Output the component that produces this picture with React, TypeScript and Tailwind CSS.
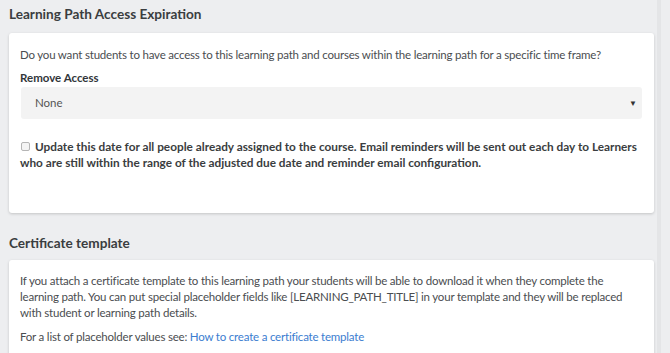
export default function App() {
  return (
    <div className="min-h-[353px] w-[670px] bg-[#edeef0] text-[#32363a] font-['Lato',sans-serif] overflow-hidden">
      <div className="w-[661px] border-r-4 border-[#e4e5e7] min-h-[353px] pl-[9px] pr-[3px]">
        <h2 className="pt-[4px] h-[33px] text-[13.6px] font-bold leading-[20px] text-[#3a3d40]">
          Learning Path Access Expiration
        </h2>
        <section className="h-[180px] bg-white rounded-[3px] shadow-[0_1px_3px_rgba(0,0,0,0.18)] px-[11px] pt-[14px]">
          <p className="text-[11.5px] tracking-[-0.2px] leading-[16px] text-[#4a4d50]">
            Do you want students to have access to this learning path and courses within the learning path for a specific time frame?
          </p>
          <label className="block mt-[7px] text-[11.5px] font-bold leading-[16px] text-[#32363a]">Remove Access</label>
          <div className="mt-[1px] ml-px mr-[1px] h-[32px] bg-[#f3f3f3] rounded-[3px] flex items-center justify-between pl-[14px] pr-[5px]">
            <span className="text-[11.5px] text-[#555]">None</span>
            <span className="text-[8px] text-[#333]">▼</span>
          </div>
          <div className="mt-[20px] text-[11.8px] font-bold leading-[16px] text-[#3a3d40]">
            <span className="inline-block w-[9px] h-[9px] border border-[#b5b5b5] rounded-[2px] bg-[#f4f4f4] mr-[5px] ml-[1px]" />
            Update this date for all people already assigned to the course. Email reminders will be sent out each day to Learners who are still within the range of the adjusted due date and reminder email configuration.
          </div>
        </section>
        <h2 className="pt-[20px] h-[47px] text-[13.6px] font-bold leading-[20px] text-[#3a3d40]">
          Certificate template
        </h2>
        <section className="bg-white rounded-[3px] shadow-[0_1px_3px_rgba(0,0,0,0.18)] px-[11px] pt-[13px] pb-[20px]">
          <p className="text-[11.5px] tracking-[-0.2px] leading-[16px] text-[#4a4d50]">
            If you attach a certificate template to this learning path your students will be able to download it when they complete the learning path. You can put special placeholder fields like [LEARNING_PATH_TITLE] in your template and they will be replaced with student or learning path details.
          </p>
          <p className="mt-[8px] text-[11.5px] tracking-[-0.2px] leading-[16px] text-[#4a4d50]">
            For a list of placeholder values see:{' '}
            <a className="text-[#3b7dd0]" href="#">How to create a certificate template</a>
          </p>
        </section>
      </div>
    </div>
  );
}
